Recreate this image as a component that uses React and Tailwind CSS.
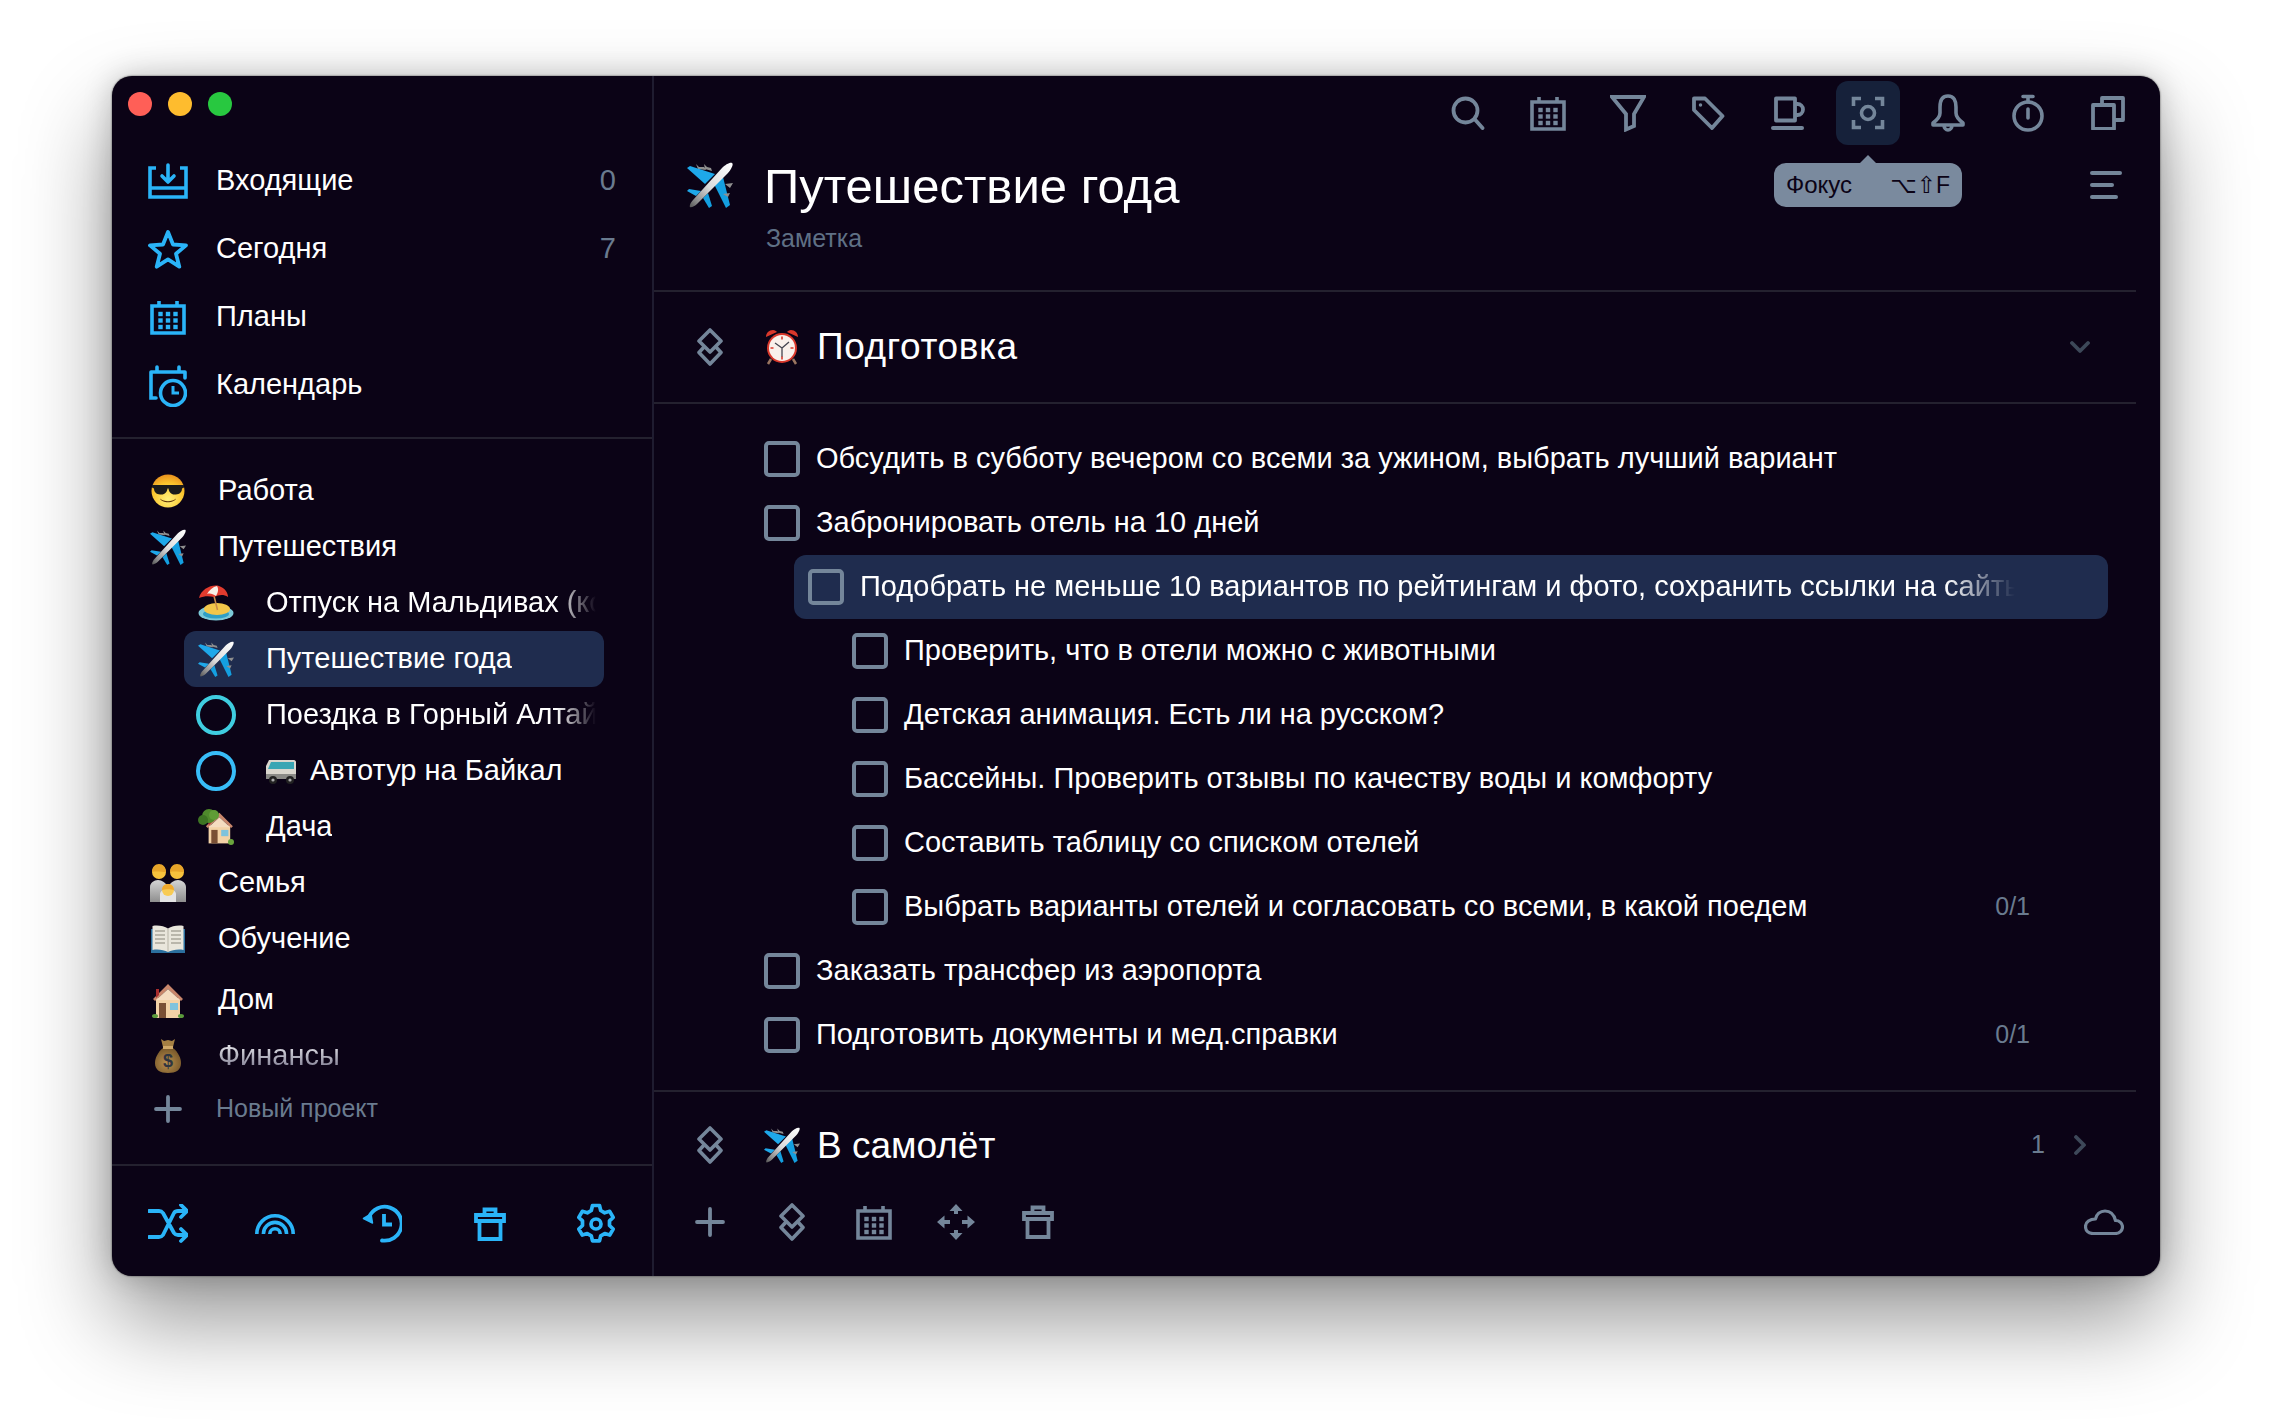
import React from 'react';

const BLUE = '#2ab4f8';
const GREY = '#74869a';

// outline icons, stroke colour comes in through `c`
const Ico = ({ w, h, c = GREY, sw = 3.6, children }) => (
  <svg width={w} height={h} viewBox={`0 0 ${w} ${h}`} fill="none" stroke={c} strokeWidth={sw} strokeLinecap="round" strokeLinejoin="round" className="shrink-0">
    {children}
  </svg>
);

const Inbox = () => (
  <Ico w={40} h={36} c={BLUE} sw={3.6}>
    <path d="M8 5H2v29h36V5h-6M2 25h36" strokeLinecap="butt" strokeLinejoin="miter" />
    <path d="M20 2v16M14 13l6 6 6-6" />
  </Ico>
);

const Star = () => (
  <Ico w={40} h={40} c={BLUE} sw={3.8}>
    <path d="M20 3l5 12.500 13 .9-10 8.300 3.300 13L20 30.400 8.700 37.700 12 24.700 2 16.400l13-.9z" />
  </Ico>
);

const Cal = ({ c = GREY }) => (
  <Ico w={36} h={36} c={c} sw={3.6}>
    <path d="M2 7h32v27H2zM9 2v5M27 2v5" strokeLinejoin="miter" strokeLinecap="butt" />
    <g fill={c} stroke="none">
      {[15, 21.5, 28].map((y) => [10.5, 18, 25.5].map((x) => <rect key={`${x}-${y}`} x={x - 2.2} y={y - 2.2} width="4.4" height="4.4" />))}
    </g>
  </Ico>
);

const CalClock = () => (
  <Ico w={38} h={44} c={BLUE} sw={3.6}>
    <path d="M8 4v5M30 4v5M2 9h34M36 9v6M2 9v26h5" strokeLinejoin="miter" />
    <circle cx="24" cy="30" r="12.500" />
    <path d="M24 23v7h6" strokeWidth="3" strokeLinejoin="miter" strokeLinecap="butt" />
  </Ico>
);

const Plus = ({ size = 28 }) => (
  <Ico w={size} h={size} c={GREY} sw={3.800}>
    <path d={`M${size / 2} 2V${size - 2}M2 ${size / 2}H${size - 2}`} />
  </Ico>
);

const Shuffle = () => (
  <Ico w={40} h={40} c={BLUE} sw={3.800}>
    <path d="M1 7h10c2 0 3 .6 4 2l11 20c1 1.500 2 2 4 2h8M1 33h10c2 0 3-.6 4-2l11-22c1-1.500 2-2 4-2h8M33 1l6 6-6 6M33 25l6 6-6 6" />
  </Ico>
);

const Rainbow = () => (
  <svg width="40" height="20" viewBox="0 0 40 20" fill="none" stroke={BLUE} strokeWidth="3.600" className="shrink-0">
    <path d="M1.800 20a18.200 18.200 0 0 1 36.400 0M8.400 20a11.600 11.600 0 0 1 23.200 0M14.800 20a5.200 5.200 0 0 1 10.400 0" />
  </svg>
);

const History = () => (
  <Ico w={40} h={40} c={BLUE} sw={3.800}>
    <path d="M7 13A17 17 0 1 1 20 36.500" />
    <path d="M1.500 14.500l9 4.500-1.500-9z" fill={BLUE} strokeWidth="1.500" />
    <path d="M22 10v10.500h8" strokeLinejoin="miter" strokeLinecap="butt" />
  </Ico>
);

const Trash = ({ c = BLUE }) => (
  <Ico w={32} h={34} c={c} sw={3.800}>
    <path d="M10.500 8V2.500h11V8M2 8h28v6H2zM5.500 14v18h21V14" strokeLinejoin="miter" strokeLinecap="butt" />
  </Ico>
);

const Gear = () => (
  <Ico w={40} h={42} c={BLUE} sw={3.700}>
    <path d="M16.500 2.500h7l1.200 5 4 2.300 5-1.500 3.500 6.100-3.700 3.500v4.600l3.700 3.500-3.500 6.100-5-1.500-4 2.300-1.200 5h-7l-1.200-5-4-2.300-5 1.500-3.500-6.100 3.700-3.500v-4.600L2.800 14.400l3.500-6.100 5 1.500 4-2.300z" />
    <circle cx="20" cy="21" r="5" />
  </Ico>
);

const Search = () => (
  <Ico w={34} h={34} sw={3.800}>
    <circle cx="14.500" cy="14.500" r="12" />
    <path d="M23.500 23l8 9" />
  </Ico>
);

const Filter = () => (
  <Ico w={36} h={38} sw={3.800}>
    <path d="M2 3h32L24 20v12l-8 3.500V20z" strokeLinejoin="miter" />
  </Ico>
);

const Tag = () => (
  <Ico w={34} h={34} sw={3.800}>
    <path d="M3 2.500h11L31.500 20 21 32 3 14z" />
    <circle cx="9.500" cy="9" r="1" fill={GREY} strokeWidth="1.500" />
  </Ico>
);

const Coffee = () => (
  <Ico w={34} h={34} sw={3.800}>
    <path d="M5 2.500h19v22H5zM24 8h2.500a5.500 5.500 0 0 1 0 11H24" />
    <path d="M2 32h29" strokeWidth="4" />
  </Ico>
);

const Focus = () => (
  <Ico w={34} h={34} sw={3.600}>
    <path d="M10 2.500H2.500V10M24 2.500h7.500V10M10 31.500H2.500V24M24 31.500h7.500V24" strokeLinecap="butt" strokeLinejoin="miter" />
    <circle cx="17" cy="17" r="6.500" />
  </Ico>
);

const Bell = () => (
  <Ico w={36} h={38} sw={3.600}>
    <path d="M18 2c-6 0-8 5-8 11v6c0 4-3 7-7 10v2h30v-2c-4-3-7-6-7-10v-6c0-6-2-11-8-11zM14 31c0 3 2 5 4 5s4-2 4-5" />
  </Ico>
);

const Timer = () => (
  <Ico w={32} h={38} sw={3.600}>
    <circle cx="16" cy="22" r="14" />
    <path d="M11 2.500h10M16 3v5M16 15v9" />
  </Ico>
);

const Copy = () => (
  <Ico w={34} h={34} sw={3.800}>
    <path d="M11 9V2h21v22h-8" />
    <path d="M2 9h21v24H2z" />
  </Ico>
);

const Diamonds = () => (
  <Ico w={26} h={38} sw={3.600}>
    <path d="M13 2l11 11-11 11L2 13zM7 19l-5 5.500L13 36l11-11.500-5-5.500" />
  </Ico>
);

const Move = () => (
  <svg width="38" height="36" viewBox="0 0 38 36" fill={GREY} className="shrink-0">
    <path d="M19 0l6.500 7h-13zM19 36l-6.500-7h13zM0 18l7.500-6.500v13zM38 18l-7.500-6.500v13z" />
    <path d="M7 16h6v4H7zM25 16h6v4h-6zM17 7h4v3h-4zM17 26h4v3h-4z" />
  </svg>
);

const Cloud = () => (
  <Ico w={40} h={26} sw={3.2}>
    <path d="M9 24.500h22c4.500 0 7.500-3 7.500-6.500s-3-6.500-7-6.500C30 5.500 26 2 21 2c-5 0-8.500 3.500-9.500 8C6 10 1.500 13 1.500 17.500c0 4 3 7 7.500 7z" />
  </Ico>
);

const Chevron = ({ right }) => (
  <svg width="20" height="20" viewBox="0 0 20 20" fill="none" stroke="#3d4859" strokeWidth="3.800" strokeLinecap="round" strokeLinejoin="round" className="shrink-0">
    <path d={right ? 'M6 2l8 8-8 8' : 'M2 6l8 8 8-8'} />
  </svg>
);

// colour pictures standing in for the system emoji
const Plane = ({ size = 46 }) => (
  <svg width={size} height={size} viewBox="0 0 46 46" className="shrink-0">
    <defs>
      <linearGradient id="planeBody" x1="1" y1="0" x2="0" y2="1">
        <stop offset="0" stopColor="#ffffff" />
        <stop offset="0.550" stopColor="#dcdcdc" />
        <stop offset="0.850" stopColor="#8c8c8c" />
        <stop offset="1" stopColor="#555555" />
      </linearGradient>
    </defs>
    <path d="M9 2l3 3 5 0 2 3-8-1zM17 2l3 3 4 1 1 3-7-2z" fill="#8f8f8f" />
    <path d="M0 6l3-2 25 8-10 10z" fill="#1ea8ea" />
    <path d="M26 20l9-9 8 32-4 3z" fill="#149fe0" />
    <path d="M0 29l2-2 12 2-5 5z" fill="#1ea8ea" />
    <path d="M16 36l5-5 4 13-3 2z" fill="#149fe0" />
    <path d="M36 32l7-1-2 4zM38 22l8-1-3 5z" fill="#8f8f8f" />
    <path d="M6 38L35 6c3-3 8-6 10-5s-1 7-4 10L10 42c-2 2-6 4-7 3s1-5 3-7z" fill="url(#planeBody)" />
  </svg>
);

const Cool = () => (
  <svg width="34" height="34" viewBox="0 0 34 34" className="shrink-0">
    <defs>
      <radialGradient id="coolFace" cx="0.500" cy="0.750" r="0.800">
        <stop offset="0" stopColor="#fff07a" />
        <stop offset="0.600" stopColor="#fbc62e" />
        <stop offset="1" stopColor="#e7871a" />
      </radialGradient>
    </defs>
    <circle cx="17" cy="17" r="16.500" fill="url(#coolFace)" />
    <path d="M1 11h32v2.500l-2 1c0 5-4 6-7.500 6S18 18 17.500 14.500h-1C16 18 14 20.500 10.500 20.500S3 19.500 3 14.500l-2-1z" fill="#1b1b1b" />
    <path d="M9 24.500c4 3.500 12 3.500 16 0-2 5-14 5-16 0z" fill="#5e3208" />
  </svg>
);

const Island = () => (
  <svg width="36" height="36" viewBox="0 0 36 36" className="shrink-0">
    <ellipse cx="18" cy="28" rx="17.500" ry="7.500" fill="#7cc9d8" />
    <ellipse cx="18" cy="29" rx="13" ry="4.500" fill="#2f9fc5" />
    <ellipse cx="19" cy="24" rx="13" ry="6" fill="#f3c64a" />
    <path d="M16 11l3.500 14" stroke="#c98a4a" strokeWidth="1.500" />
    <path d="M1 13C3 4 14-1 21 1c6 2 9 7 9 11-5-3-9-2-14 0-5-1-10-1-15 1z" fill="#e23b2e" />
    <path d="M9 9c2-4 6-7 10-8 2 3 1 7-1 10-3-2-6-3-9-2z" fill="#f7efe6" />
  </svg>
);

const Van = () => (
  <svg width="30" height="28" viewBox="0 0 30 28" className="shrink-0">
    <path d="M3 3h25c1 0 2 1 2 2v17H0V9z" fill="#d9d6cd" />
    <path d="M5 5h23v7H2z" fill="#39a6b4" />
    <path d="M0 17h30v5H0z" fill="#8a8a86" />
    <circle cx="7" cy="23" r="4" fill="#222" />
    <circle cx="7" cy="23" r="1.600" fill="#aaa" />
    <circle cx="24" cy="23" r="4" fill="#222" />
    <circle cx="24" cy="23" r="1.600" fill="#aaa" />
  </svg>
);

const HouseShape = () => (
  <g>
    <path d="M4 16h24v20H4z" fill="#f3d2a6" />
    <path d="M16 2L1 17l2 2L16 7l13 12 2-2z" fill="#c9876c" />
    <path d="M16 7L4 18h24z" fill="#f5dcc0" />
    <path d="M7 21h7v15H7z" fill="#7a5035" />
    <path d="M18 21h8v7h-8z" fill="#7ec3dd" />
    <path d="M4 7h3v6l-3 3z" fill="#a82d2d" />
  </g>
);

const House = () => (
  <svg width="34" height="36" viewBox="0 0 32 36" className="shrink-0">
    <HouseShape />
    <ellipse cx="3" cy="34" rx="3" ry="2" fill="#5b9a3c" />
    <ellipse cx="29" cy="34" rx="3" ry="2" fill="#5b9a3c" />
  </svg>
);

const Dacha = () => (
  <svg width="36" height="36" viewBox="0 0 36 36" className="shrink-0">
    <g transform="translate(7 2) scale(0.900)">
      <HouseShape />
    </g>
    <circle cx="11" cy="7" r="7" fill="#4f8a2c" />
    <circle cx="5" cy="11" r="5" fill="#3d7423" />
    <circle cx="16" cy="6" r="5" fill="#5f9c36" />
    <ellipse cx="33" cy="33" rx="3" ry="3" fill="#6aa53d" />
  </svg>
);

const Family = () => (
  <svg width="36" height="38" viewBox="0 0 36 38" className="shrink-0">
    <defs>
      <linearGradient id="famCoat" x1="0" y1="0" x2="0" y2="1">
        <stop offset="0" stopColor="#d5d5d5" />
        <stop offset="1" stopColor="#8e8e8e" />
      </linearGradient>
    </defs>
    <path d="M0 38V23c0-4 4-7 8-7s8 3 10 7c2-4 6-7 10-7s8 3 8 7v15z" fill="url(#famCoat)" />
    <circle cx="9" cy="8" r="7" fill="#f7c23c" />
    <path d="M2 8c0-5 3-8 7-8s7 3 7 8c-4 0-10-1-14 0z" fill="#e8a52a" />
    <circle cx="27" cy="8" r="7" fill="#f7c23c" />
    <path d="M20 8c0-5 3-8 7-8s7 3 7 8c-4 0-10-1-14 0z" fill="#e8a52a" />
    <path d="M10 38V30c0-3 4-5 8-5s8 2 8 5v8z" fill="#e4e4e4" />
    <circle cx="18" cy="26" r="6" fill="#f8cb54" />
    <path d="M12 26c0-4 3-6 6-6s6 2 6 6c-3-1-9-1-12 0z" fill="#f0a92c" />
  </svg>
);

const Book = () => (
  <svg width="34" height="28" viewBox="0 0 34 28" className="shrink-0">
    <path d="M0 4h34v24H0z" fill="#2b6f9e" />
    <path d="M1.500 1C7 0 13 1 17 3.500 21 1 27 0 32.500 1v24c-5.500-1-11.500 0-15.500 2-4-2-10-3-15.500-2z" fill="#e9e6dc" />
    <path d="M17 4v23" stroke="#b8b5a8" strokeWidth="1" />
    <path d="M4 6h10M4 10h10M4 14h10M4 18h10M20 6h10M20 10h10M20 14h10M20 18h10" stroke="#a9a69b" strokeWidth="1.400" />
  </svg>
);

const MoneyBag = () => (
  <svg width="26" height="34" viewBox="0 0 26 34" className="shrink-0">
    <defs>
      <radialGradient id="bagFill" cx="0.450" cy="0.600" r="0.700">
        <stop offset="0" stopColor="#b98f4e" />
        <stop offset="1" stopColor="#6d4f24" />
      </radialGradient>
    </defs>
    <path d="M6 0l3 2 4-1 4 1 3-2-2 8H8z" fill="#a58043" />
    <path d="M8 9h10c5 4 8 10 8 15 0 7-5 10-13 10S0 31 0 24c0-5 3-11 8-15z" fill="url(#bagFill)" />
    <path d="M8 7h10v3H8z" fill="#d0a968" />
    <text x="13" y="28" textAnchor="middle" fontSize="18" fontWeight="700" fill="#2f3540" fontFamily="'Liberation Sans', sans-serif">$</text>
  </svg>
);

const Alarm = () => (
  <svg width="36" height="36" viewBox="0 0 36 36" className="shrink-0">
    <path d="M7 30l-3 5M29 30l3 5" stroke="#9a7560" strokeWidth="2.500" />
    <path d="M2 8c0-4 3-7 7-7 2 0 3 1 4 2zM34 8c0-4-3-7-7-7-2 0-3 1-4 2z" fill="#d9382b" />
    <circle cx="18" cy="19" r="15" fill="#d9382b" />
    <circle cx="18" cy="19" r="13" fill="#f9f1eb" />
    <path d="M18 19l-7-5M18 19l7-6M18 19v9" stroke="#44454f" strokeWidth="1.300" />
    <path d="M18 7.500v3M18 27.500v3M6.500 19h3M26.500 19h3" stroke="#d9382b" strokeWidth="1.600" />
  </svg>
);

const Ring = ({ c }) => (
  <div className="w-10 h-10 rounded-full border-4 shrink-0" style={{ borderColor: c }} />
);

const NAV = [
  { icon: <Inbox />, label: 'Входящие', count: 0 },
  { icon: <Star />, label: 'Сегодня', count: 7 },
  { icon: <Cal c={BLUE} />, label: 'Планы' },
  { icon: <CalClock />, label: 'Календарь' },
];

const CHECKLIST = [
  { level: 0, text: 'Обсудить в субботу вечером со всеми за ужином, выбрать лучший вариант' },
  { level: 0, text: 'Забронировать отель на 10 дней' },
  { level: 1, active: true, text: 'Подобрать не меньше 10 вариантов по рейтингам и фото, сохранить ссылки на сайты' },
  { level: 2, text: 'Проверить, что в отели можно с животными' },
  { level: 2, text: 'Детская анимация. Есть ли на русском?' },
  { level: 2, text: 'Бассейны. Проверить отзывы по качеству воды и комфорту' },
  { level: 2, text: 'Составить таблицу со списком отелей' },
  { level: 2, text: 'Выбрать варианты отелей и согласовать со всеми, в какой поедем', count: '0/1' },
  { level: 0, text: 'Заказать трансфер из аэропорта' },
  { level: 0, text: 'Подготовить документы и мед.справки', count: '0/1' },
];

const Check = () => (
  <div className="w-9 h-9 rounded-[5px] border-4 border-[#74869a] shrink-0" />
);

function Project({ icon, children, className = '' }) {
  return (
    <div className={`flex items-center h-14 pl-9 text-[29px] text-white ${className}`}>
      <div className="w-10 flex justify-center shrink-0">{icon}</div>
      <span className="ml-[30px]">{children}</span>
    </div>
  );
}

function SubProject({ icon, active, fade, children }) {
  return (
    <div className={`flex items-center h-14 ml-[72px] w-[420px] pl-3 rounded-xl text-[29px] text-white ${active ? 'bg-[#1f2c4e]' : ''}`}>
      <div className="w-10 flex justify-center shrink-0">{icon}</div>
      <div className={`ml-[30px] whitespace-nowrap overflow-hidden ${fade ? 'w-[330px] [mask-image:linear-gradient(to_right,#000_88%,transparent)]' : ''}`}>{children}</div>
    </div>
  );
}

function Sidebar() {
  return (
    <aside className="w-[542px] shrink-0 border-r-2 border-[#1f1c30] flex flex-col">
      <div className="h-[70px] flex items-start pt-4 pl-4 gap-4 shrink-0">
        <div className="w-6 h-6 rounded-full bg-[#ff5f57]" />
        <div className="w-6 h-6 rounded-full bg-[#febc2e]" />
        <div className="w-6 h-6 rounded-full bg-[#28c840]" />
      </div>
      <nav className="pb-[19px] border-b-2 border-[#24212f]">
        {NAV.map((item) => (
          <div key={item.label} className="flex items-center h-[68px] pl-9 pr-9 text-[29px] text-white pt-px">
            <div className="w-10 flex justify-center shrink-0">{item.icon}</div>
            <span className="ml-7 flex-1">{item.label}</span>
            {item.count !== undefined && <span className="text-[#6a7b8f]">{item.count}</span>}
          </div>
        ))}
      </nav>
      <div className="flex-1 pt-6">
        <Project icon={<Cool />}>Работа</Project>
        <Project icon={<Plane size={36} />}>Путешествия</Project>
        <SubProject icon={<Island />} fade>Отпуск на Мальдивах (ко</SubProject>
        <SubProject icon={<Plane size={36} />} active>Путешествие года</SubProject>
        <SubProject icon={<Ring c="#3fcde0" />} fade>Поездка в Горный Алтай</SubProject>
        <SubProject icon={<Ring c="#38bdf8" />}>
          <div className="flex items-center gap-[14px]"><Van />Автотур на Байкал</div>
        </SubProject>
        <SubProject icon={<Dacha />}>Дача</SubProject>
        <Project icon={<Family />}>Семья</Project>
        <Project icon={<Book />}>Обучение</Project>
        <Project icon={<House />} className="mt-[5px]">Дом</Project>
        <Project icon={<MoneyBag />}>
          <span className="text-transparent bg-clip-text bg-gradient-to-b from-white to-[#77748a]">Финансы</span>
        </Project>
        <div className="flex items-center h-[50px] pl-9 text-[25px] text-[#6a7b8f]">
          <div className="w-10 flex justify-center shrink-0"><Plus /></div>
          <span className="ml-7">Новый проект</span>
        </div>
      </div>
      <div className="h-[112px] shrink-0 border-t-2 border-[#24212f] flex items-center justify-between px-9 pt-1.5">
        <Shuffle />
        <div className="w-10 flex justify-center"><Rainbow /></div>
        <History />
        <div className="w-10 flex justify-center pl-0.5"><Trash /></div>
        <Gear />
      </div>
    </aside>
  );
}

function Toolbar() {
  const cell = 'w-20 flex items-center justify-center';
  return (
    <div className="h-[74px] shrink-0 flex items-center justify-end pr-3">
      <div className={cell}><Search /></div>
      <div className={cell}><Cal /></div>
      <div className={cell}><Filter /></div>
      <div className={cell}><Tag /></div>
      <div className={cell}><Coffee /></div>
      <div className={cell}>
        <div className="relative w-16 h-16 rounded-xl bg-[#16213a] flex items-center justify-center">
          <Focus />
          <div className="absolute top-[74px] left-1/2 -translate-x-1/2 w-0 h-0 border-x-[8px] border-x-transparent border-b-[8px] border-b-[#7a8a9e]" />
          <div className="absolute top-[82px] -left-[62px] w-[188px] h-11 rounded-xl bg-[#7a8a9e] flex items-center justify-between px-3 text-[#0b0316] text-[24px] z-10">
            <span>Фокус</span>
            <span className="text-[23px]">⌥⇧F</span>
          </div>
        </div>
      </div>
      <div className={cell}><Bell /></div>
      <div className={cell}><Timer /></div>
      <div className={cell}><Copy /></div>
    </div>
  );
}

function TaskRow({ task }) {
  if (task.active) {
    return (
      <div className="h-16 flex items-center ml-[140px] mr-[28px] pl-[14px] rounded-xl bg-[#1f2c4e] text-[29px] text-white">
        <Check />
        <span className="ml-4 w-[1155px] overflow-hidden whitespace-nowrap [mask-image:linear-gradient(to_right,#000_94%,transparent)]">{task.text}</span>
      </div>
    );
  }
  return (
    <div className={`h-16 flex items-center pr-[106px] text-[29px] text-white ${task.level === 2 ? 'pl-[198px]' : 'pl-[110px]'}`}>
      <Check />
      <span className="ml-4 flex-1 whitespace-nowrap">{task.text}</span>
      {task.count && <span className="text-[25px] text-[#6a7b8f]">{task.count}</span>}
    </div>
  );
}

export default function App() {
  return (
    <div className="min-h-screen bg-white pt-[76px] pl-[112px] font-['Liberation_Sans','DejaVu_Sans',sans-serif]">
      <div className="w-[2048px] h-[1200px] rounded-[20px] bg-[#0b0316] flex overflow-hidden shadow-[0_44px_90px_rgba(0,0,0,0.42),0_0_30px_rgba(0,0,0,0.2),0_0_2px_rgba(0,0,0,0.7)]">
        <Sidebar />
        <main className="flex-1 min-w-0 flex flex-col">
          <Toolbar />
          <div className="h-[70px] shrink-0 flex items-center justify-between pl-[33px] pr-[38px]">
            <div className="flex items-center">
              <Plane />
              <h1 className="ml-[31px] mt-0.5 text-[49px] leading-none font-normal text-white">Путешествие года</h1>
            </div>
            <div className="flex flex-col items-start gap-2 w-8">
              <div className="h-1 w-8 rounded-full bg-[#74869a]" />
              <div className="h-1 w-6 rounded-full bg-[#74869a]" />
              <div className="h-1 w-7 rounded-full bg-[#74869a]" />
            </div>
          </div>
          <div className="mt-[3px] h-[69px] shrink-0 pl-[112px] text-[25px] leading-[30px] text-[#5f7085] mr-6 border-b-2 border-[#24212f]">Заметка</div>

          <div className="h-[112px] shrink-0 flex items-center mr-6 pl-[43px] pr-[46px] border-b-2 border-[#24212f]">
            <Diamonds />
            <div className="ml-[41px]"><Alarm /></div>
            <span className="ml-[17px] text-[37px] tracking-[0.6px] text-white flex-1">Подготовка</span>
            <Chevron />
          </div>

          <div className="pt-[23px] pb-[23px] mr-6 border-b-2 border-[#24212f]">
            {CHECKLIST.map((t) => <TaskRow key={t.text} task={t} />)}
          </div>

          <div className="h-[106px] shrink-0 flex items-center mr-6 pl-[43px] pr-[46px]">
            <Diamonds />
            <div className="ml-[41px]"><Plane size={36} /></div>
            <span className="ml-[17px] mt-0.5 text-[37px] text-white flex-1">В самолёт</span>
            <span className="text-[25px] text-[#6a7b8f] mr-[25px]">1</span>
            <Chevron right />
          </div>

          <div className="h-12 shrink-0 flex items-center pl-[15px] pr-9">
            <div className="w-[82px] flex justify-center"><Plus size={30} /></div>
            <div className="w-[82px] flex justify-center"><Diamonds /></div>
            <div className="w-[82px] flex justify-center"><Cal /></div>
            <div className="w-[82px] flex justify-center"><Move /></div>
            <div className="w-[82px] flex justify-center"><Trash c={GREY} /></div>
            <div className="ml-auto"><Cloud /></div>
          </div>
        </main>
      </div>
    </div>
  );
}
